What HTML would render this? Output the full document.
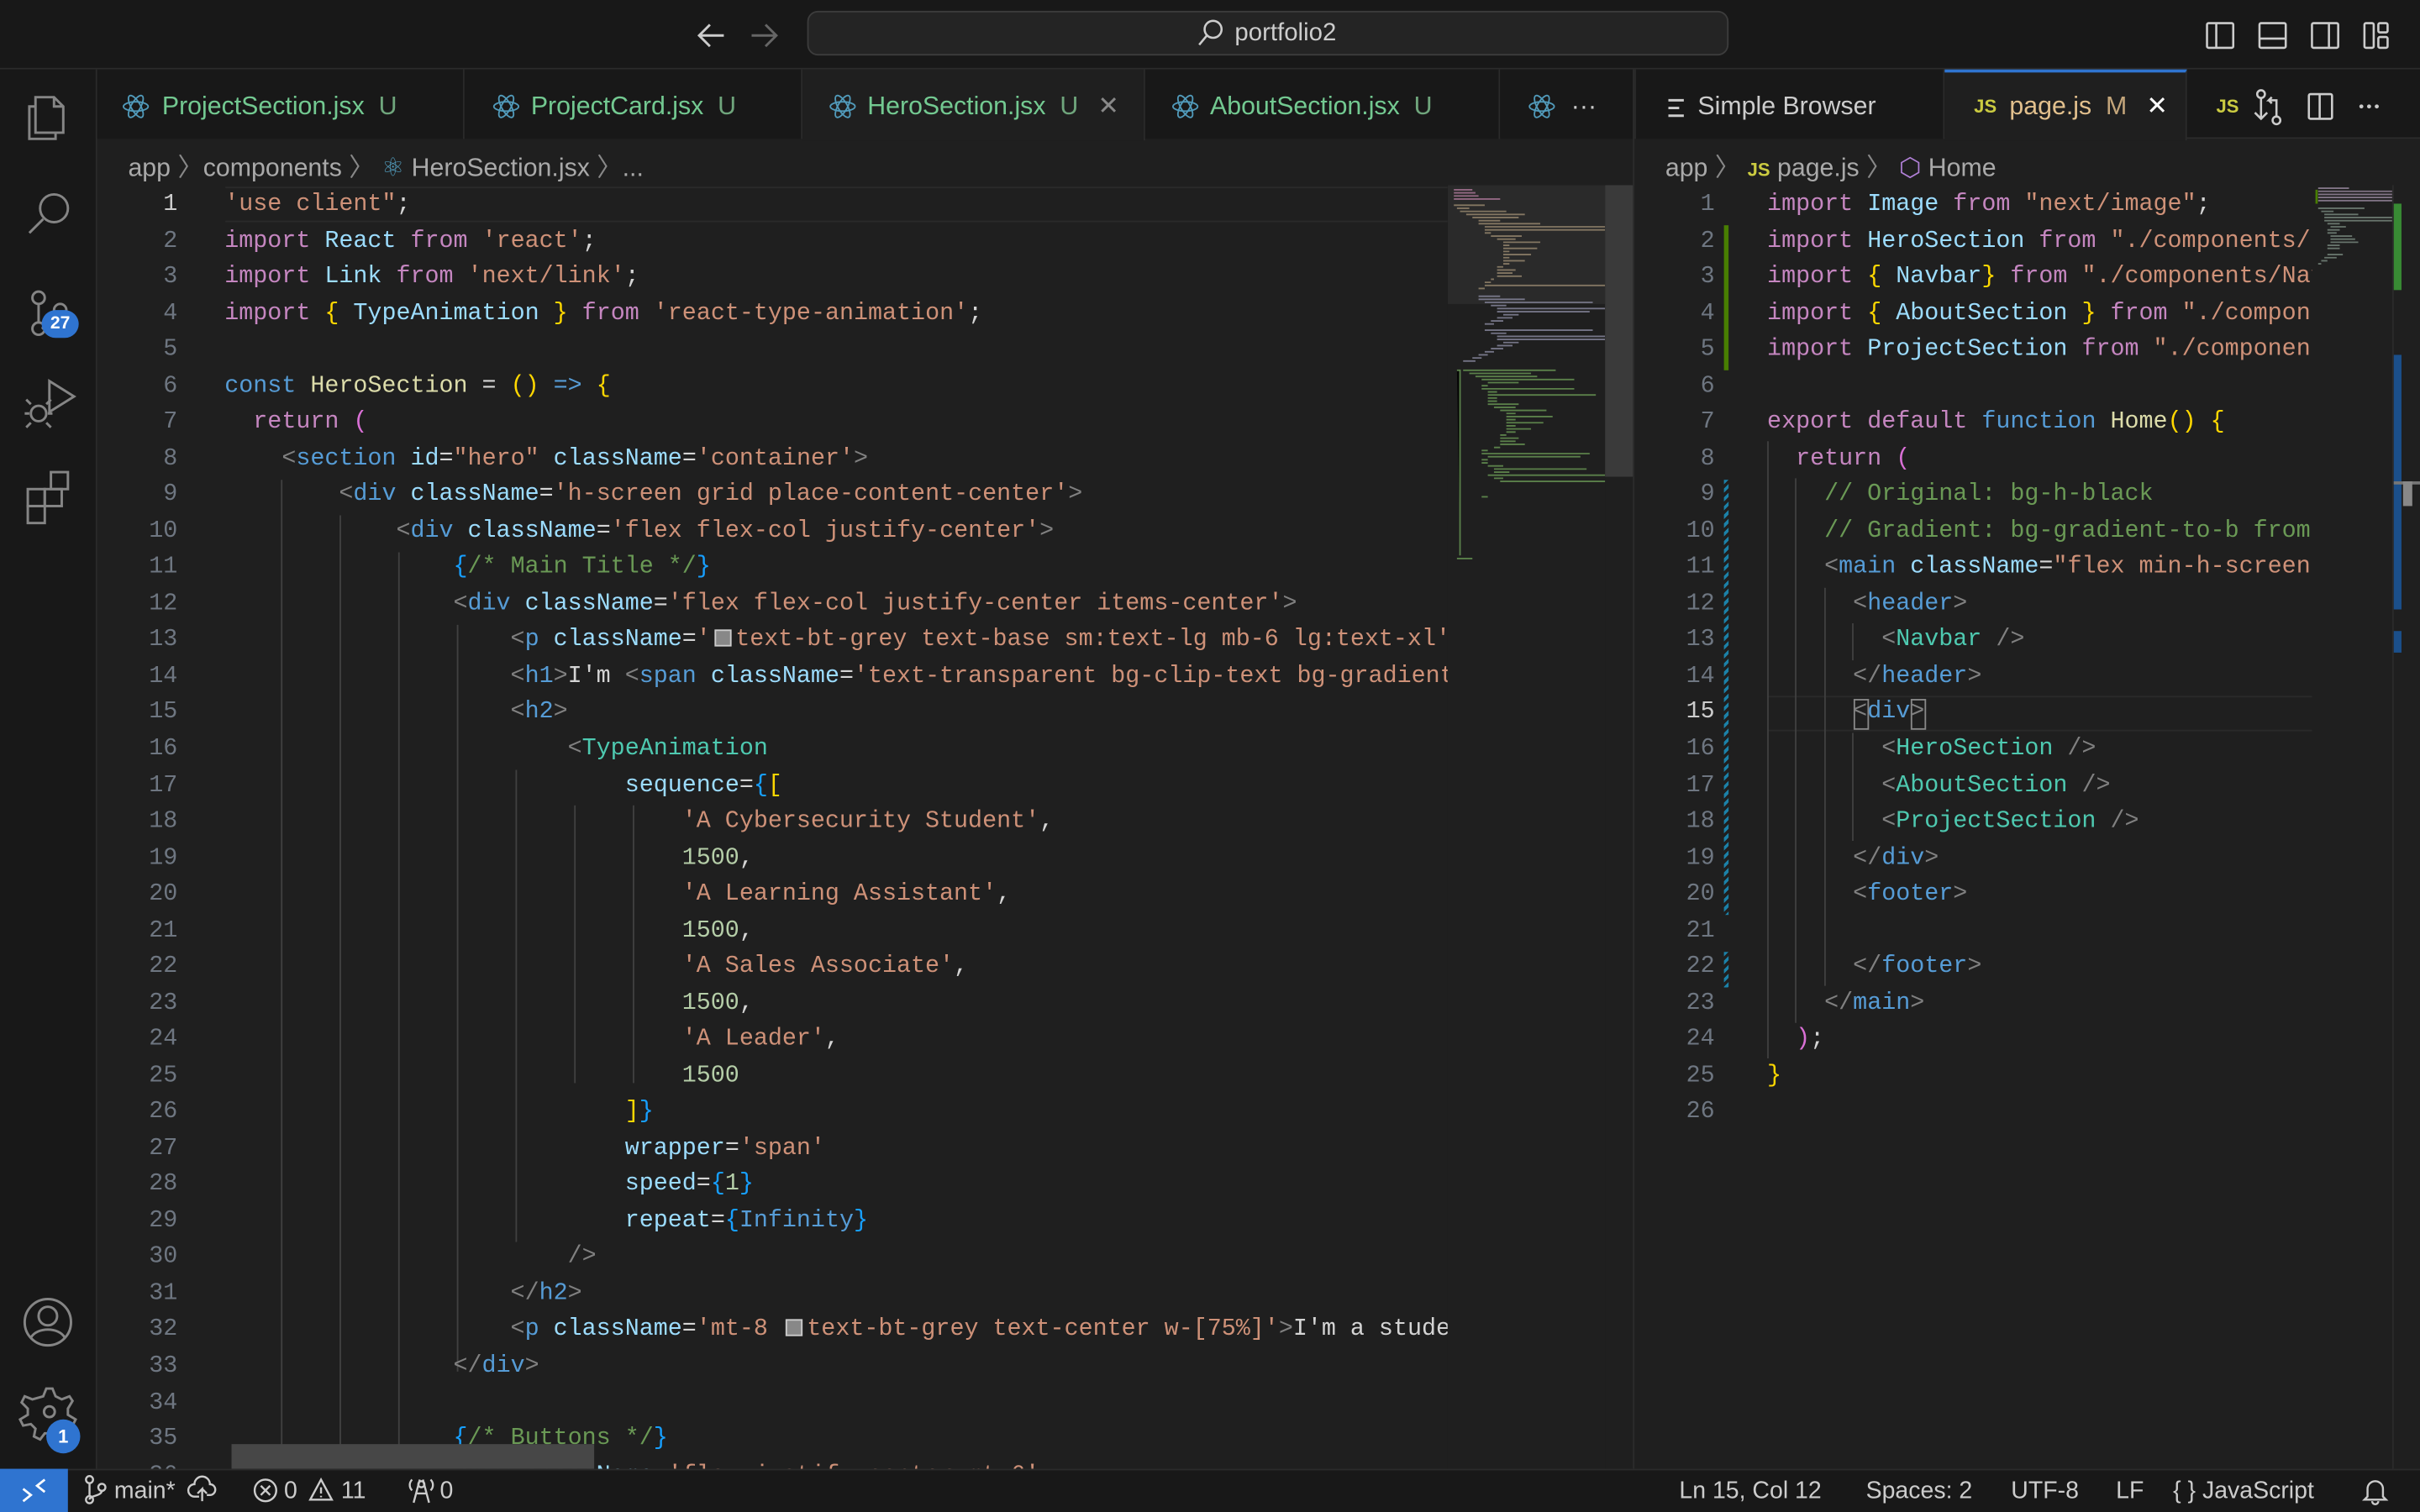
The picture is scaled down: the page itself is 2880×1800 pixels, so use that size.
<!DOCTYPE html>
<html><head><meta charset="utf-8">
<style>
html,body{margin:0;padding:0;background:#1f1f1f;width:2880px;height:1800px;overflow:hidden}
#w{position:absolute;left:0;top:0;width:1568px;height:980px;transform:scale(1.836735);transform-origin:0 0;background:#1f1f1f;font-family:"Liberation Sans",sans-serif;color:#ccc;overflow:hidden}
.abs{position:absolute}
.code{position:absolute;font-family:"Liberation Mono",monospace;font-size:15.45px;white-space:pre;line-height:23.53px}
.ln{position:absolute;font-family:"Liberation Mono",monospace;font-size:15.45px;line-height:23.53px;text-align:right;color:#6e7681;white-space:pre}
.k{color:#c586c0}.v{color:#9cdcfe}.s{color:#ce9178}.f{color:#dcdcaa}.y{color:#ffd700}.p{color:#da70d6}.b{color:#569cd6}.t{color:#569cd6}.g{color:#808080}.c{color:#4ec9b0}.cm{color:#6a9955}.n{color:#b5cea8}.w{color:#d4d4d4}.jb{color:#179fff}
.tab{position:absolute;top:45px;height:45px;background:#181818;border-right:1px solid #2b2b2b;font-size:16.5px;line-height:48px;color:#73c991;box-sizing:border-box;padding-left:18px;white-space:nowrap}
.sw{display:inline-block;width:11px;height:11px;border:1px solid #ccc;background:#888;vertical-align:-1px;margin:0 3px 0 2px;box-sizing:border-box}
.sb{position:absolute;top:952px;font-size:15.5px;line-height:28px;color:#ccc;white-space:nowrap}
.ico{stroke:#858585;fill:none;stroke-width:1.6}
</style></head><body><div id="w">
<!-- title bar -->
<div class="abs" style="left:0;top:0;width:1568px;height:44px;background:#181818;border-bottom:1px solid #2b2b2b"></div>
<svg class="abs" style="left:450px;top:12px" width="60" height="22"><path d="M19 11H4M10 4L3 11l7 7" stroke="#ccc" stroke-width="1.6" fill="none"/><path d="M37 11h15M46 4l7 7-7 7" stroke="#666" stroke-width="1.6" fill="none"/></svg>
<div class="abs" style="left:523px;top:7px;width:597px;height:29px;background:#242424;border:1px solid #3c3c3c;border-radius:7px;box-sizing:border-box"></div>
<svg class="abs" style="left:775px;top:12px" width="20" height="20"><circle cx="11" cy="7" r="5.5" stroke="#ccc" stroke-width="1.4" fill="none"/><path d="M7 11l-5 6" stroke="#ccc" stroke-width="1.4"/></svg>
<div class="abs" style="left:800px;top:13px;font-size:16px;color:#ccc">portfolio2</div>
<svg class="abs" style="left:1428px;top:12px" width="130" height="22"><g stroke="#ccc" stroke-width="1.4" fill="none"><rect x="2" y="3" width="17" height="16" rx="1"/><path d="M8 3v16"/><rect x="36" y="3" width="17" height="16" rx="1"/><path d="M36 13h17"/><rect x="70" y="3" width="17" height="16" rx="1"/><path d="M81 3v16"/><rect x="104" y="3" width="6" height="16" rx="1"/><rect x="113" y="3" width="6" height="6" rx="1"/><rect x="113" y="12" width="6" height="7" rx="1"/></g></svg>
<!-- activity bar -->
<div class="abs" style="left:0;top:45px;width:62px;height:907px;background:#181818;border-right:1px solid #2b2b2b"></div>
<svg class="abs" style="left:10px;top:55px" width="44" height="300"><g class="ico" stroke-width="1.8">
<path d="M13 14h-4v21h17v-4M13 8h12l6 6v17H13z M25 8v6h6"/>
<circle cx="25" cy="80" r="9"/><path d="M18 87l-9 9"/>
<circle cx="15" cy="138" r="4"/><circle cx="15" cy="158" r="4"/><circle cx="29" cy="146" r="4"/><path d="M15 142v12M29 150c0 5-8 6-12 8"/>
<path d="M22 192l16 10-16 10z" /><circle cx="15" cy="213" r="5"/><path d="M9 213h-3M21 213h3M10 207l-3-3M20 207l3-3M10 219l-3 3M20 219l3 3"/>
<rect x="8" y="262" width="11" height="11"/><rect x="19" y="262" width="11" height="11"/><rect x="8" y="273" width="11" height="11"/><rect x="23" y="251" width="11" height="11"/>
</g></svg>
<div class="abs" style="left:27px;top:201px;width:24px;height:18px;border-radius:9px;background:#2f74d0;color:#fff;font-size:11.5px;font-weight:bold;text-align:center;line-height:18px">27</div>
<svg class="abs" style="left:12px;top:838px" width="40" height="100"><g class="ico" stroke-width="1.8"><circle cx="19" cy="19" r="15"/><circle cx="19" cy="15" r="6"/><path d="M8 29c4-7 18-7 22 0"/>
<path d="M16 67l2-5h4l2 5 4 2 5-2 2 3-3 5v4l5 3-2 4-5-1-3 3 1 5-4 2-3-4h-4l-3 4-4-2 1-5-3-3-5 1-2-4 5-3v-4l-4-4 2-4 5 2z"/><circle cx="20" cy="77" r="3.5"/></g></svg>
<div class="abs" style="left:30px;top:920px;width:22px;height:22px;border-radius:11px;background:#2f74d0;color:#fff;font-size:12px;font-weight:bold;text-align:center;line-height:22px">1</div>
<!-- tabs -->
<div class="abs" style="left:63px;top:45px;width:1505px;height:45px;background:#181818;border-bottom:1px solid #2b2b2b;box-sizing:border-box"></div>
<div class="tab" style="left:63px;width:238px;padding-left:42px">ProjectSection.jsx&nbsp;&nbsp;<span style="color:#6fa57c">U</span></div>
<div class="tab" style="left:301px;width:219px;padding-left:43px">ProjectCard.jsx&nbsp;&nbsp;<span style="color:#6fa57c">U</span></div>
<div class="tab" style="left:520px;width:222px;padding-left:42px;background:#1f1f1f;height:46px">HeroSection.jsx&nbsp;&nbsp;<span style="color:#6fa57c">U</span> <span style="color:#888;margin-left:8px">✕</span></div>
<div class="tab" style="left:742px;width:230px;padding-left:42px">AboutSection.jsx&nbsp;&nbsp;<span style="color:#6fa57c">U</span></div>
<div class="tab" style="left:972px;width:87px;padding-left:46px;color:#ccc">···</div>
<div class="tab" style="left:1059px;width:201px;padding-left:40px;color:#ccc;border-left:1px solid #2b2b2b">Simple Browser</div>
<div class="tab" style="left:1260px;width:157px;padding-left:42px;background:#1f1f1f;height:46px;border-top:2px solid #2f74d0;line-height:44px;color:#e2c08d">page.js&nbsp;&nbsp;<span style="color:#c3a57a">M</span> <span style="color:#fff;margin-left:8px">✕</span></div>
<svg class="abs" style="left:78px;top:59px" width="960" height="22"><g stroke="#519aba" stroke-width="1" fill="none">
<g transform="translate(10,10)"><ellipse rx="8" ry="3" /><ellipse rx="8" ry="3" transform="rotate(60)"/><ellipse rx="8" ry="3" transform="rotate(120)"/></g>
<g transform="translate(250,10)"><ellipse rx="8" ry="3" /><ellipse rx="8" ry="3" transform="rotate(60)"/><ellipse rx="8" ry="3" transform="rotate(120)"/></g>
<g transform="translate(468,10)"><ellipse rx="8" ry="3" /><ellipse rx="8" ry="3" transform="rotate(60)"/><ellipse rx="8" ry="3" transform="rotate(120)"/></g>
<g transform="translate(690,10)"><ellipse rx="8" ry="3" /><ellipse rx="8" ry="3" transform="rotate(60)"/><ellipse rx="8" ry="3" transform="rotate(120)"/></g>
<g transform="translate(921,10)"><ellipse rx="8" ry="3" /><ellipse rx="8" ry="3" transform="rotate(60)"/><ellipse rx="8" ry="3" transform="rotate(120)"/></g>
</g></svg>
<svg class="abs" style="left:1080px;top:62px" width="14" height="16"><path d="M1 3h10M1 8h7M1 13h10" stroke="#ccc" stroke-width="1.6"/></svg>
<div class="abs" style="left:1279px;top:62px;font-size:12px;font-weight:bold;color:#cbcb41">JS</div>
<div class="abs" style="left:1436px;top:62px;font-size:12px;font-weight:bold;color:#cbcb41">JS</div>
<svg class="abs" style="left:1458px;top:57px" width="100" height="26"><g stroke="#ccc" stroke-width="1.4" fill="none"><circle cx="7" cy="4" r="2.5"/><path d="M7 7v12"/><circle cx="17" cy="21" r="2.5"/><path d="M17 18V8h-5l2-2m-2 2l2 2"/><path d="M3 16l4 4 4-4"/><rect x="38" y="4" width="15" height="16" rx="1"/><path d="M45 4v16"/></g><g fill="#ccc"><circle cx="72" cy="12" r="1.3"/><circle cx="77" cy="12" r="1.3"/><circle cx="82" cy="12" r="1.3"/></g></svg>
<!-- breadcrumbs -->
<div class="abs" style="left:83px;top:95px;font-size:16.5px;color:#a9a9a9;white-space:nowrap">app <span style="color:#888">〉</span>components <span style="color:#888">〉</span> <span style="color:#519aba">⚛&#xFE0E;</span> HeroSection.jsx <span style="color:#888">〉</span>...</div>
<div class="abs" style="left:1079px;top:95px;font-size:16.5px;color:#a9a9a9;white-space:nowrap">app <span style="color:#888">〉</span> <b style="font-size:12px;color:#cbcb41">JS</b> page.js <span style="color:#888">〉</span> <span style="color:#b180d7">⬡</span> Home</div>
<div class="abs" style="left:1058px;top:45px;width:1px;height:907px;background:#2b2b2b"></div>
<!-- left editor -->
<div class="abs" style="left:146px;top:121px;width:792px;height:23px;border-top:1px solid #2a2a2a;border-bottom:1px solid #2a2a2a;box-sizing:border-box"></div>
<div class="ln" style="left:70px;top:121px;width:45px;"><span style="color:#ccc">1</span>
2
3
4
5
6
7
8
9
10
11
12
13
14
15
16
17
18
19
20
21
22
23
24
25
26
27
28
29
30
31
32
33
34
35
36</div>
<div class="abs" style="left:146px;top:122px;width:792px;height:830px;overflow:hidden">
<div class="abs" style="left:36px;top:189px;width:1px;height:660px;background:#404040"></div>
<div class="abs" style="left:74px;top:212px;width:1px;height:640px;background:#404040"></div>
<div class="abs" style="left:112px;top:236px;width:1px;height:640px;background:#404040"></div>
<div class="abs" style="left:150px;top:283px;width:1px;height:484px;background:#404040"></div>
<div class="abs" style="left:188px;top:377px;width:1px;height:306px;background:#404040"></div>
<div class="abs" style="left:226px;top:400px;width:1px;height:180px;background:#404040"></div>
<div class="abs" style="left:264px;top:400px;width:1px;height:180px;background:#404040"></div>
<div class="code" style="left:-0.5px;top:-1px"><span class="s">'use client"</span><span class="w">;</span>
<span class="k">import</span> <span class="v">React</span> <span class="k">from</span> <span class="s">'react'</span><span class="w">;</span>
<span class="k">import</span> <span class="v">Link</span> <span class="k">from</span> <span class="s">'next/link'</span><span class="w">;</span>
<span class="k">import</span> <span class="y">{</span> <span class="v">TypeAnimation</span> <span class="y">}</span> <span class="k">from</span> <span class="s">'react-type-animation'</span><span class="w">;</span>

<span class="b">const</span> <span class="f">HeroSection</span> <span class="w">=</span> <span class="y">()</span> <span class="b">=&gt;</span> <span class="y">{</span>
  <span class="k">return</span> <span class="p">(</span>
    <span class="g">&lt;</span><span class="t">section</span> <span class="v">id</span><span class="w">=</span><span class="s">"hero"</span> <span class="v">className</span><span class="w">=</span><span class="s">'container'</span><span class="g">&gt;</span>
        <span class="g">&lt;</span><span class="t">div</span> <span class="v">className</span><span class="w">=</span><span class="s">'h-screen grid place-content-center'</span><span class="g">&gt;</span>
            <span class="g">&lt;</span><span class="t">div</span> <span class="v">className</span><span class="w">=</span><span class="s">'flex flex-col justify-center'</span><span class="g">&gt;</span>
                <span class="jb">{</span><span class="cm">/* Main Title */</span><span class="jb">}</span>
                <span class="g">&lt;</span><span class="t">div</span> <span class="v">className</span><span class="w">=</span><span class="s">'flex flex-col justify-center items-center'</span><span class="g">&gt;</span>
                    <span class="g">&lt;</span><span class="t">p</span> <span class="v">className</span><span class="w">=</span><span class="s">'<span class="sw"></span>text-bt-grey text-base sm:text-lg mb-6 lg:text-xl'</span>
                    <span class="g">&lt;</span><span class="t">h1</span><span class="g">&gt;</span><span class="w">I'm </span><span class="g">&lt;</span><span class="t">span</span> <span class="v">className</span><span class="w">=</span><span class="s">'text-transparent bg-clip-text bg-gradient'</span>
                    <span class="g">&lt;</span><span class="t">h2</span><span class="g">&gt;</span>
                        <span class="g">&lt;</span><span class="c">TypeAnimation</span>
                            <span class="v">sequence</span><span class="w">=</span><span class="jb">{</span><span class="y">[</span>
                                <span class="s">'A Cybersecurity Student'</span><span class="w">,</span>
                                <span class="n">1500</span><span class="w">,</span>
                                <span class="s">'A Learning Assistant'</span><span class="w">,</span>
                                <span class="n">1500</span><span class="w">,</span>
                                <span class="s">'A Sales Associate'</span><span class="w">,</span>
                                <span class="n">1500</span><span class="w">,</span>
                                <span class="s">'A Leader'</span><span class="w">,</span>
                                <span class="n">1500</span>
                            <span class="y">]</span><span class="jb">}</span>
                            <span class="v">wrapper</span><span class="w">=</span><span class="s">'span'</span>
                            <span class="v">speed</span><span class="w">=</span><span class="jb">{</span><span class="n">1</span><span class="jb">}</span>
                            <span class="v">repeat</span><span class="w">=</span><span class="jb">{</span><span class="b">Infinity</span><span class="jb">}</span>
                        <span class="g">/&gt;</span>
                    <span class="g">&lt;/</span><span class="t">h2</span><span class="g">&gt;</span>
                    <span class="g">&lt;</span><span class="t">p</span> <span class="v">className</span><span class="w">=</span><span class="s">'mt-8 <span class="sw"></span>text-bt-grey text-center w-[75%]'</span><span class="g">&gt;</span><span class="w">I'm a student</span>
                <span class="g">&lt;/</span><span class="t">div</span><span class="g">&gt;</span>

                <span class="jb">{</span><span class="cm">/* Buttons */</span><span class="jb">}</span>
                <span class="g">&lt;</span><span class="t">div</span> <span class="v">className</span><span class="w">=</span><span class="s">'flex justify-center mt-6'</span></div>
</div>
<!-- left minimap -->
<div class="abs" style="left:938px;top:120px;width:102px;height:832px;background:#1f1f1f;overflow:hidden">
<div class="abs" style="left:0;top:0;width:102px;height:77px;background:#2a2a2a"></div>
<svg class="abs" style="left:2px;top:2px" width="100" height="270"><g stroke-width="1" opacity=".8">
<path d="M2 1h12M2 3h14M2 5h16M2 7h30" stroke="#b07a9c"/><path d="M2 11h20M4 13h8M6 15h30M10 17h38M14 19h30M18 21h14M18 23h40M22 25h80M22 27h80M22 29h4M26 31h20M30 33h12M34 35h24M34 37h4M34 39h22M34 41h4M34 43h18M34 45h4M34 47h14M34 49h4M30 51h4M30 53h12M30 55h10M30 57h16M26 59h2M22 61h4M22 63h80M18 65h4" stroke="#9a8a70"/>
<path d="M18 70h14M18 72h30M22 74h70M26 76h10M30 78h70M30 80h60M34 82h10M30 84h10M26 86h8M22 88h6M22 92h70M26 94h10M30 96h70M30 98h70M34 100h10M30 102h10M26 104h8M22 106h6M18 108h6M14 110h6M8 112h8" stroke="#8a8aa0"/>
<path d="M4 118h2v120M8 118h60M12 120h40M16 122h40M20 124h60M24 126h20M20 128h4M20 130h60M24 132h6M24 134h70M24 136h6M24 138h6M24 140h20M28 142h14M32 144h30M36 146h6M36 148h30M36 150h6M36 152h24M36 154h6M36 156h16M36 158h6M32 160h4M32 162h12M32 164h10M32 166h16M28 168h4M20 170h4M20 172h70M24 174h60M20 176h4M20 178h4M24 180h10M28 182h60M28 184h10M24 186h80M28 188h6M32 190h70M20 200h4M4 240h10" stroke="#6a9955"/>
</g></svg>
</div>
<div class="abs" style="left:1040px;top:120px;width:18px;height:189px;background:#3a3a3a"></div>
<div class="abs" style="left:150px;top:936px;width:235px;height:16px;background:#474747"></div>
<!-- right editor -->
<div class="abs" style="left:1145px;top:451px;width:353px;height:23px;border-top:1px solid #2a2a2a;border-bottom:1px solid #2a2a2a;box-sizing:border-box"></div>
<div class="ln" style="left:1070px;top:121px;width:41px;">1
2
3
4
5
6
7
8
9
10
11
12
13
14
<span style="color:#ccc">15</span>
16
17
18
19
20
21
22
23
24
25
26</div>
<div class="abs" style="left:1117px;top:146px;width:3px;height:94px;background:#487e02"></div>
<div class="abs" style="left:1117px;top:311px;width:3px;height:282px;background:repeating-linear-gradient(135deg,#1b81a8 0 2px,transparent 2px 4px)"></div>
<div class="abs" style="left:1117px;top:617px;width:3px;height:23px;background:repeating-linear-gradient(135deg,#1b81a8 0 2px,transparent 2px 4px)"></div>
<div class="abs" style="left:1145px;top:122px;width:353px;height:830px;overflow:hidden">
<div class="abs" style="left:0;top:164px;width:1px;height:400px;background:#404040"></div>
<div class="abs" style="left:18px;top:188px;width:1px;height:353px;background:#404040"></div>
<div class="abs" style="left:37px;top:259px;width:1px;height:258px;background:#404040"></div>
<div class="abs" style="left:55px;top:282px;width:1px;height:24px;background:#404040"></div>
<div class="abs" style="left:55px;top:353px;width:1px;height:70px;background:#404040"></div>
<div class="abs" style="left:56px;top:331px;width:10px;height:20px;border:1px solid #888;box-sizing:border-box"></div>
<div class="abs" style="left:93px;top:331px;width:10px;height:20px;border:1px solid #888;box-sizing:border-box"></div>
<div class="code" style="left:0;top:-1px"><span class="k">import</span> <span class="v">Image</span> <span class="k">from</span> <span class="s">"next/image"</span><span class="w">;</span>
<span class="k">import</span> <span class="v">HeroSection</span> <span class="k">from</span> <span class="s">"./components/HeroSection"</span>
<span class="k">import</span> <span class="y">{</span> <span class="v">Navbar</span><span class="y">}</span> <span class="k">from</span> <span class="s">"./components/Navbar"</span>
<span class="k">import</span> <span class="y">{</span> <span class="v">AboutSection</span> <span class="y">}</span> <span class="k">from</span> <span class="s">"./components"</span>
<span class="k">import</span> <span class="v">ProjectSection</span> <span class="k">from</span> <span class="s">"./components/"</span>

<span class="k">export</span> <span class="k">default</span> <span class="b">function</span> <span class="f">Home</span><span class="y">()</span> <span class="y">{</span>
  <span class="k">return</span> <span class="p">(</span>
    <span class="cm">// Original: bg-h-black</span>
    <span class="cm">// Gradient: bg-gradient-to-b from-</span>
    <span class="g">&lt;</span><span class="t">main</span> <span class="v">className</span><span class="w">=</span><span class="s">"flex min-h-screen flex"</span>
      <span class="g">&lt;</span><span class="t">header</span><span class="g">&gt;</span>
        <span class="g">&lt;</span><span class="c">Navbar</span> <span class="g">/&gt;</span>
      <span class="g">&lt;/</span><span class="t">header</span><span class="g">&gt;</span>
      <span class="g">&lt;</span><span class="t">div</span><span class="g">&gt;</span>
        <span class="g">&lt;</span><span class="c">HeroSection</span> <span class="g">/&gt;</span>
        <span class="g">&lt;</span><span class="c">AboutSection</span> <span class="g">/&gt;</span>
        <span class="g">&lt;</span><span class="c">ProjectSection</span> <span class="g">/&gt;</span>
      <span class="g">&lt;/</span><span class="t">div</span><span class="g">&gt;</span>
      <span class="g">&lt;</span><span class="t">footer</span><span class="g">&gt;</span>

      <span class="g">&lt;/</span><span class="t">footer</span><span class="g">&gt;</span>
    <span class="g">&lt;/</span><span class="t">main</span><span class="g">&gt;</span>
  <span class="p">)</span><span class="w">;</span>
<span class="y">}</span>
</div>
</div>
<!-- right minimap -->
<svg class="abs" style="left:1500px;top:121px" width="50" height="60"><g stroke-width="1" opacity=".8"><path d="M2 1h20M2 3h48M2 5h48M2 7h48M2 9h48" stroke="#9a8aa0"/><path d="M2 14h30M4 16h8M6 18h22M6 20h44M6 22h44M8 24h8M10 26h10M8 28h8M8 30h6M10 32h14M10 34h16M10 36h18M8 38h8M8 40h8M8 44h10M6 46h8M4 48h4M2 50h2" stroke="#7a8a80"/></g><path d="M1 2v9" stroke="#487e02" stroke-width="1.5"/></svg>
<div class="abs" style="left:1550px;top:120px;width:18px;height:832px;border-left:1px solid #2b2b2b;box-sizing:border-box"></div>
<div class="abs" style="left:1551px;top:132px;width:5px;height:56px;background:#388a34"></div>
<div class="abs" style="left:1551px;top:230px;width:5px;height:165px;background:#1b4f8a"></div>
<div class="abs" style="left:1551px;top:409px;width:5px;height:14px;background:#1b4f8a"></div>
<div class="abs" style="left:1551px;top:312px;width:17px;height:2px;background:#777"></div>
<div class="abs" style="left:1557px;top:312px;width:6px;height:16px;background:#888"></div>
<!-- status bar -->
<div class="abs" style="left:0;top:952px;width:1568px;height:28px;background:#181818;border-top:1px solid #2b2b2b;box-sizing:border-box"></div>
<div class="abs" style="left:0;top:952px;width:44px;height:28px;background:#2f74d0"></div>
<svg class="abs" style="left:12px;top:957px" width="22" height="18"><path d="M3 8l5 4-5 4M17 2l-5 4 5 4" stroke="#fff" stroke-width="1.5" fill="none"/></svg>
<svg class="abs" style="left:52px;top:956px" width="300" height="20"><g stroke="#ccc" stroke-width="1.3" fill="none"><circle cx="6" cy="3" r="2.3"/><circle cx="6" cy="16" r="2.3"/><circle cx="14" cy="8" r="2.3"/><path d="M6 5v9M14 10c0 4-8 3-8 6"/>
<path d="M77 14h-3a4 4 0 0 1 0-8 5 5 0 0 1 10 0 3.5 3.5 0 0 1 0 7h-2M79 17v-8l-3 3m3-3l3 3"/>
<circle cx="120" cy="10" r="7"/><path d="M117 7l6 6m0-6l-6 6"/>
<path d="M156 3l7 13h-14z M156 8v4M156 13.5v1"/>
<path d="M220 3l-4 15M222 3l4 15M218 12h6"/><circle cx="221" cy="6" r="2"/><path d="M215 3c-2 2-2 5 0 7M227 3c2 2 2 5 0 7"/></g></svg>
<div class="sb" style="left:74px;top:953px">main*</div>
<div class="sb" style="left:184px;top:953px">0</div>
<div class="sb" style="left:221px;top:953px">11</div>
<div class="sb" style="left:285px;top:953px">0</div>
<div class="sb" style="left:1088px;top:953px">Ln 15, Col 12</div>
<div class="sb" style="left:1209px;top:953px">Spaces: 2</div>
<div class="sb" style="left:1303px;top:953px">UTF-8</div>
<div class="sb" style="left:1371px;top:953px">LF</div>
<div class="sb" style="left:1408px;top:953px">{ } JavaScript</div>
<svg class="abs" style="left:1530px;top:956px" width="18" height="20"><path d="M4 14V9a5 5 0 0 1 10 0v5l2 2H2z M7 17a2 2 0 0 0 4 0" stroke="#ccc" stroke-width="1.3" fill="none"/></svg>
</div></body></html>
